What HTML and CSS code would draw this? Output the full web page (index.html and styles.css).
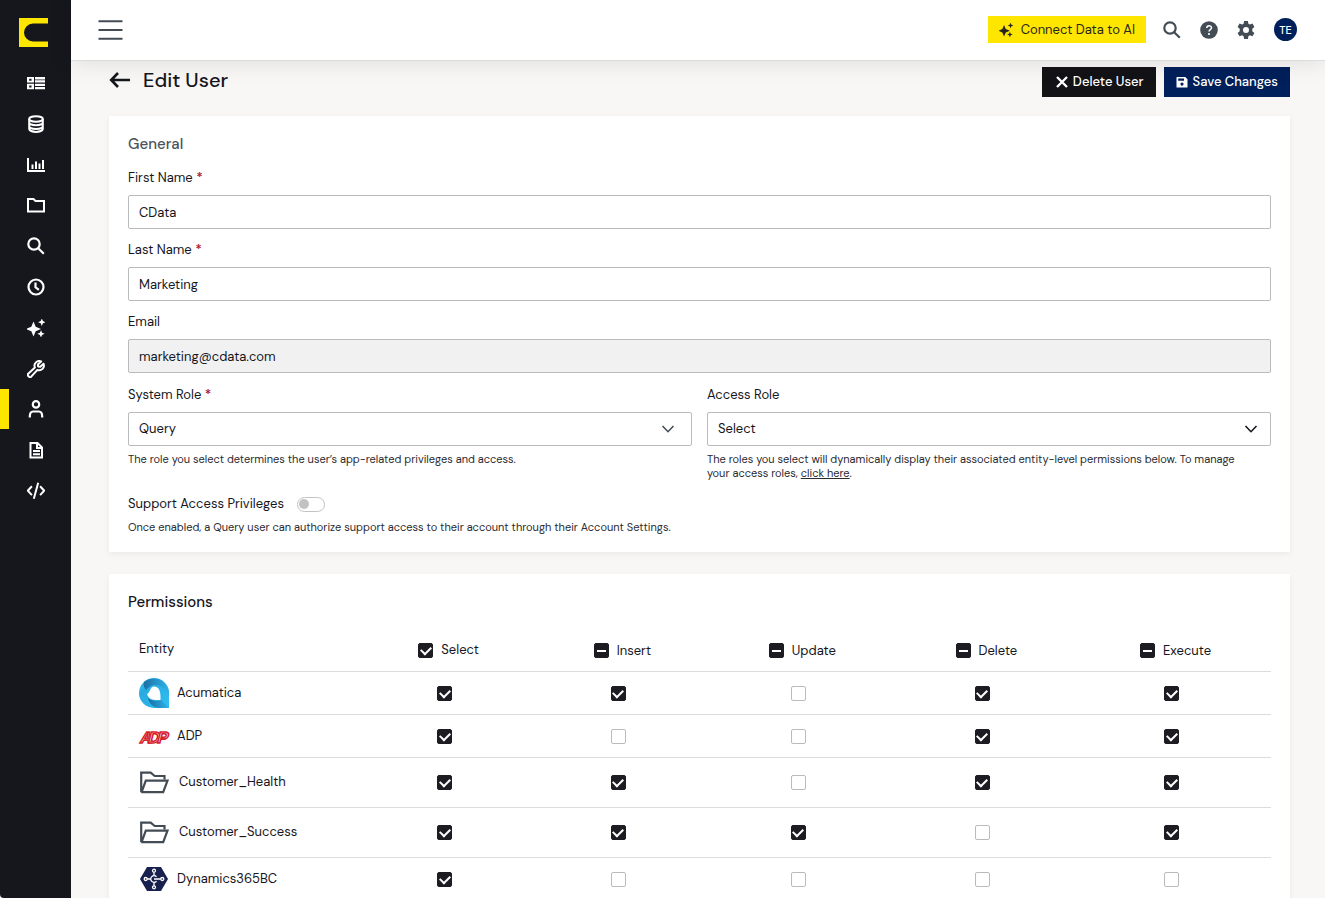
FILE: index.html
```html
<!DOCTYPE html>
<html lang="en">
<head>
<meta charset="utf-8">
<meta name="viewport" content="width=device-width, initial-scale=1">
<title>Edit User</title>
<link rel="stylesheet" href="styles.css">
</head>
<body>
<svg class="defs" aria-hidden="true">
  <symbol id="sparkles" viewBox="0 0 18 18"><path fill="currentColor" d="M6.500 2.500 8.700 7.800 14 10 8.700 12.200 6.500 17.500 4.300 12.200-1 10 4.300 7.800ZM14.800-.5l1.100 2.600L18.500 3.200l-2.600 1.100-1.100 2.600-1.100-2.600-2.600-1.100 2.600-1.100ZM14 11.300l1.100 2.500 2.500 1-2.500 1.100L14 18.500l-1.100-2.600-2.500-1.100 2.500-1Z"/></symbol>
  <symbol id="magnifier" viewBox="0 0 18 18"><g fill="none" stroke="currentColor" stroke-width="2.200"><circle cx="7" cy="7" r="5.700"/><path d="m11.200 11.200 5.600 5.600"/></g></symbol>
  <symbol id="chevron" viewBox="0 0 14 14"><path d="m1.500 4 5.500 5.700L12.500 4" fill="none" stroke="currentColor" stroke-width="1.600"/></symbol>
  <symbol id="folder-open" viewBox="0 0 30 23"><path d="M2.200 21.200V1.700h9.500l4 3.300h9.800v3.200M2.200 21.200h22l4.300-11.500H6.800L2.600 21.200" fill="none" stroke="currentColor" stroke-width="2.200"/></symbol>
</svg>
<div class="app">
  <aside class="sidebar">
    <a class="logo" href="#" aria-label="Home"><svg viewBox="0 0 29 29"><path fill="#ffe600" d="M0 0h29v5.500H14A9 9 0 0 0 14 23.500h15V29H0Z"/></svg></a>
    <nav class="nav" aria-label="Main">
      <a href="#" aria-label="Dashboard"><svg viewBox="0 0 18 18"><g fill="currentColor"><path fill-rule="evenodd" d="M0 3h7v5.500H0Zm2.200 1.700v2h2.300v-2ZM0 9.800h7v5.500H0Zm2.200 1.700v2h2.300v-2Z"/><path d="M8 3h10v2.400H8ZM8 6.300h10v2.300H8ZM8 9.700h10V12H8ZM8 12.900h10v2.400H8Z"/></g></svg></a>
      <a href="#" aria-label="Connections"><svg viewBox="0 0 18 18"><g fill="none" stroke="currentColor" stroke-width="2"><ellipse cx="9" cy="4" rx="6.800" ry="2.700"/><path d="M2.200 4v10c0 1.500 3 2.900 6.800 2.900s6.800-1.400 6.800-2.900V4M2.200 7.600c0 1.500 3 2.700 6.800 2.700s6.800-1.200 6.800-2.700M2.200 11.200c0 1.500 3 2.700 6.800 2.700s6.800-1.200 6.800-2.700"/></g></svg></a>
      <a href="#" aria-label="Usage"><svg viewBox="0 0 18 18"><path d="M1 2v13h17M5.500 13V8.500M9 13V5.500M12.500 13V7.500M16 13V4" fill="none" stroke="currentColor" stroke-width="2"/></svg></a>
      <a href="#" aria-label="Workspaces"><svg viewBox="0 0 18 18"><path d="M1 3h5.500l2 2H17v10.500H1Z" fill="none" stroke="currentColor" stroke-width="2"/></svg></a>
      <a href="#" aria-label="Explorer"><svg><use href="#magnifier"/></svg></a>
      <a href="#" aria-label="Jobs"><svg viewBox="0 0 18 18"><g fill="none" stroke="currentColor" stroke-width="2.200"><circle cx="9" cy="9" r="7.500"/><path d="M8.500 4.500V9.300l3.400 2.500"/></g></svg></a>
      <a href="#" aria-label="AI"><svg class="spark"><use href="#sparkles"/></svg></a>
      <a href="#" aria-label="Tools"><svg viewBox="0 0 18 18"><path d="M14.200 1.500a4.700 4.700 0 0 0-6.300 6.100L1.200 13.800a1.500 1.500 0 0 0 0 2.100l.9.800a1.500 1.500 0 0 0 2.100 0l6.200-6.800a4.700 4.700 0 0 0 6.100-6.200l-3.200 3-2.200-.3-.2-2Z" fill="none" stroke="currentColor" stroke-width="2" stroke-linejoin="round"/></svg></a>
      <a class="current" href="#" aria-label="Users" aria-current="page"><svg viewBox="0 0 18 18"><g fill="none" stroke="currentColor" stroke-width="2.200"><circle cx="9" cy="4.400" r="3.200"/><path d="M2.800 17.500v-1c0-3 1.200-5 3.400-5h5.600c2.200 0 3.400 2 3.400 5v1"/></g></svg></a>
      <a href="#" aria-label="Logs"><svg viewBox="0 0 18 18"><path d="M3.500 2h7l4.500 4.500V16.500h-11.500ZM10 2v5h5M6 10h7M6 13.200h7" fill="none" stroke="currentColor" stroke-width="2"/></svg></a>
      <a href="#" aria-label="API"><svg viewBox="0 0 18 18"><path d="M4.900 4.300.8 8.700l4.100 4.400M13.100 4.300l4.100 4.400-4.100 4.400M11.200.7 6.800 16.700" fill="none" stroke="currentColor" stroke-width="2"/></svg></a>
    </nav>
  </aside>
  <div class="page">
    <header class="topbar">
      <button class="menu" type="button" aria-label="Toggle menu"><svg viewBox="0 0 24 20"><path d="M0 1.200h24M0 10h24M0 18.800h24" stroke="currentColor" stroke-width="2"/></svg></button>
      <div class="topbar-tools">
        <button class="button connect" type="button"><svg><use href="#sparkles"/></svg>Connect Data to AI</button>
        <button class="tool" type="button" aria-label="Search"><svg><use href="#magnifier"/></svg></button>
        <button class="tool" type="button" aria-label="Help"><svg viewBox="0 0 18 18"><circle cx="9" cy="9" r="8.800" fill="currentColor"/><path d="M6.800 7c0-3 4.700-2.900 4.700-.2C11.500 8.600 9 8.500 9 10.600" fill="none" stroke="#fff" stroke-width="1.500"/><circle cx="9" cy="13" r="1.100" fill="#fff"/></svg></button>
        <button class="tool" type="button" aria-label="Settings"><svg viewBox="0 0 18 18"><path fill="currentColor" fill-rule="evenodd" d="M7.100 0h3.800l.5 2.700 1.500.9 2.600-1 1.900 3.300-2.100 1.800v2.600l2.100 1.800-1.900 3.200-2.600-1-1.500.9-.5 2.800H7.100l-.5-2.800-1.500-.9-2.600 1L.6 12.100l2.100-1.800V7.700L.6 5.900l1.900-3.300 2.600 1 1.500-.9ZM9 6a3 3 0 1 0 0 6 3 3 0 0 0 0-6Z"/></svg></button>
        <button class="avatar" type="button" aria-label="Account">TE</button>
      </div>
    </header>
    <main class="content">
      <div class="title-row">
        <a class="back" href="#" aria-label="Back"><svg viewBox="0 0 22 18"><path d="M21 9H2.500M9 2 2.200 9 9 16" fill="none" stroke="currentColor" stroke-width="2.600"/></svg></a>
        <h1>Edit User</h1>
        <div class="actions">
          <button class="button dark" type="button"><svg viewBox="0 0 12 12"><path d="m1 1 10 10M11 1 1 11" stroke="currentColor" stroke-width="2.400"/></svg>Delete User</button>
          <button class="button navy" type="button"><svg viewBox="0 0 12 12"><path fill="currentColor" fill-rule="evenodd" d="M1 1h8.200L11.500 3.300V11q0 .5-.5.500H1q-.5 0-.5-.5V1.500Q.5 1 1 1Zm1.200 1.500v2.300h5.800V2.500ZM6 6.500a1.600 1.600 0 1 0 0 3.200 1.600 1.600 0 0 0 0-3.200Z"/></svg>Save Changes</button>
        </div>
      </div>

      <form class="card general">
        <h2 class="muted">General</h2>
        <div class="fields">
          <div class="field"><label for="first">First Name <span class="required">*</span></label><input class="control" id="first" type="text" value="CData"></div>
          <div class="field"><label for="last">Last Name <span class="required">*</span></label><input class="control" id="last" type="text" value="Marketing"></div>
          <div class="field"><label for="email">Email</label><input class="control" id="email" type="email" value="marketing@cdata.com" readonly></div>
          <div class="pair">
            <div class="field">
              <label for="system">System Role <span class="required">*</span></label>
              <div class="select soft"><select class="control" id="system"><option>Query</option></select><svg><use href="#chevron"/></svg></div>
              <p class="hint">The role you select determines the user’s app-related privileges and access.</p>
            </div>
            <div class="field">
              <label for="access">Access Role</label>
              <div class="select"><select class="control" id="access"><option>Select</option></select><svg><use href="#chevron"/></svg></div>
              <p class="hint">The roles you select will dynamically display their associated entity-level permissions below. To manage your access roles, <a href="#">click here</a>.</p>
            </div>
          </div>
        </div>
        <div class="support"><label for="support">Support Access Privileges</label><input class="switch" id="support" type="checkbox" role="switch"></div>
        <p class="hint">Once enabled, a Query user can authorize support access to their account through their Account Settings.</p>
      </form>

      <section class="card permissions">
        <h2>Permissions</h2>
        <table>
          <colgroup><col class="col-entity"><col class="col-select"><col class="col-insert"><col class="col-update"><col class="col-delete"><col class="col-execute"></colgroup>
          <thead>
            <tr>
              <th scope="col">Entity</th>
              <th scope="col"><label><input class="check" type="checkbox" checked>Select</label></th>
              <th scope="col"><label><input class="check partial" type="checkbox">Insert</label></th>
              <th scope="col"><label><input class="check partial" type="checkbox">Update</label></th>
              <th scope="col"><label><input class="check partial" type="checkbox">Delete</label></th>
              <th scope="col"><label><input class="check partial" type="checkbox">Execute</label></th>
            </tr>
          </thead>
          <tbody>
            <tr>
              <th scope="row"><span class="entity"><svg viewBox="0 0 30 30"><defs><linearGradient id="aqua" x2="1" y2="1"><stop stop-color="#35c6f5"/><stop offset=".3" stop-color="#28aae1"/><stop offset="1" stop-color="#2fc0f2"/></linearGradient><linearGradient id="deep" x2="1" y2="0"><stop stop-color="#1a6fa5"/><stop offset="1" stop-color="#2fb4ea"/></linearGradient></defs><path fill="url(#aqua)" d="M15 0a15 15 0 0 1 15 15v15H15A15 15 0 0 1 15 0Z"/><path fill="url(#deep)" d="M5 4C14-3 29 2 30 14v4C25 6 14 3 7 12 5 9 4 7 5 4Z"/><path fill="url(#deep)" d="M9 20c4 3 9 4 13 2L30 30H20c-7-1-10-5-11-10Z"/><path fill="#fff" d="M15 8.500c5 0 7 5 6.500 13.500h-5c-5 0-7.500-3-8.500-6 3-1 3-7.500 7-7.500Z"/></svg>Acumatica</span></th>
              <td><input class="check" type="checkbox" aria-label="Acumatica select" checked></td>
              <td><input class="check" type="checkbox" aria-label="Acumatica insert" checked></td>
              <td><input class="check" type="checkbox" aria-label="Acumatica update"></td>
              <td><input class="check" type="checkbox" aria-label="Acumatica delete" checked></td>
              <td><input class="check" type="checkbox" aria-label="Acumatica execute" checked></td>
            </tr>
            <tr>
              <th scope="row"><span class="entity"><svg class="adp" viewBox="0 0 30 30" aria-hidden="true"><g transform="translate(5 0) skewX(-14)"><text class="adp-mark" x="1 9 18" y="22">ADP</text></g></svg>ADP</span></th>
              <td><input class="check" type="checkbox" aria-label="ADP select" checked></td>
              <td><input class="check" type="checkbox" aria-label="ADP insert"></td>
              <td><input class="check" type="checkbox" aria-label="ADP update"></td>
              <td><input class="check" type="checkbox" aria-label="ADP delete" checked></td>
              <td><input class="check" type="checkbox" aria-label="ADP execute" checked></td>
            </tr>
            <tr class="tall">
              <th scope="row"><span class="entity"><svg class="folder"><use href="#folder-open"/></svg>Customer_Health</span></th>
              <td><input class="check" type="checkbox" aria-label="Customer_Health select" checked></td>
              <td><input class="check" type="checkbox" aria-label="Customer_Health insert" checked></td>
              <td><input class="check" type="checkbox" aria-label="Customer_Health update"></td>
              <td><input class="check" type="checkbox" aria-label="Customer_Health delete" checked></td>
              <td><input class="check" type="checkbox" aria-label="Customer_Health execute" checked></td>
            </tr>
            <tr class="tall">
              <th scope="row"><span class="entity"><svg class="folder"><use href="#folder-open"/></svg>Customer_Success</span></th>
              <td><input class="check" type="checkbox" aria-label="Customer_Success select" checked></td>
              <td><input class="check" type="checkbox" aria-label="Customer_Success insert" checked></td>
              <td><input class="check" type="checkbox" aria-label="Customer_Success update" checked></td>
              <td><input class="check" type="checkbox" aria-label="Customer_Success delete"></td>
              <td><input class="check" type="checkbox" aria-label="Customer_Success execute" checked></td>
            </tr>
            <tr>
              <th scope="row"><span class="entity"><svg viewBox="0 0 30 30"><path fill="#18204e" d="M8 3h14l7 12-7 12H8L1 15Z"/><g fill="none" stroke="#fff" stroke-width="1.300"><path d="M17.500 12.800a3.300 3.300 0 1 0 0 4.400"/><circle cx="15" cy="6.700" r="1.500"/><circle cx="15" cy="23.300" r="1.500"/><circle cx="6.700" cy="15" r="1.500"/><circle cx="23.300" cy="15" r="1.500"/><path d="M15 8.200v3.600M15 18.200v3.600M8.200 15h3.600M15 15h6.800"/></g></svg>Dynamics365BC</span></th>
              <td><input class="check" type="checkbox" aria-label="Dynamics365BC select" checked></td>
              <td><input class="check" type="checkbox" aria-label="Dynamics365BC insert"></td>
              <td><input class="check" type="checkbox" aria-label="Dynamics365BC update"></td>
              <td><input class="check" type="checkbox" aria-label="Dynamics365BC delete"></td>
              <td><input class="check" type="checkbox" aria-label="Dynamics365BC execute"></td>
            </tr>
          </tbody>
        </table>
      </section>
    </main>
  </div>
</div>
</body>
</html>
```
FILE: styles.css
```css
* { box-sizing: border-box; }

body {
  margin: 0;
  background: #f8f7f6;
  color: #16161d;
  font: 400 13px/18px "DM Sans", Inter, "Open Sans", sans-serif;
}

h1, h2, p { margin: 0; }
button, input, select { font: inherit; color: inherit; }
svg { display: block; flex: none; }
.defs { display: none; }

.app { display: flex; height: 100vh; overflow: hidden; }

.sidebar {
  flex: none;
  width: 71px;
  padding-top: 18px;
  border-bottom-left-radius: 4px;
  background: #16161d;
  color: #fff;
}
.logo { display: block; width: 29px; margin: 0 auto 16px 19px; }
.logo svg { width: 29px; height: 29px; }
.nav {
  display: flex;
  flex-direction: column;
  justify-content: space-between;
  height: 448px;
}
.nav a {
  display: flex;
  align-items: center;
  height: 40px;
  padding-left: 27px;
  color: #fff;
}
.nav svg { width: 18px; height: 18px; }
.spark { overflow: visible; }
.nav .current { padding-left: 18px; border-left: 9px solid #ffe600; }

.page { display: flex; flex: 1; flex-direction: column; min-width: 0; }

.topbar {
  z-index: 1;
  display: flex;
  flex: none;
  align-items: center;
  justify-content: space-between;
  height: 61px;
  padding: 0 28px 1px 27px;
  border-bottom: 1px solid #dcdddd;
  background: #fff;
  box-shadow: 0 2px 24px rgb(0 0 0 / 10%);
}
.menu, .tool { padding: 0; border: 0; background: none; color: #434c55; }
.menu svg { width: 25px; height: 20px; }
.topbar-tools { display: flex; align-items: center; gap: 19px; }
.tool svg { width: 18px; height: 18px; }
.avatar {
  width: 23px;
  height: 23px;
  padding: 0;
  border: 0;
  border-radius: 50%;
  background: #00205b;
  color: #fff;
  font-size: 11px;
  font-weight: 500;
}

.button {
  display: flex;
  align-items: center;
  height: 30px;
  padding: 0 12px;
  border: 0;
  gap: 5px;
  color: #fff;
  font-weight: 500;
}
.button svg { width: 12px; height: 12px; }
.dark { padding-left: 14px; background: #121217; }
.navy { background: #00205b; }
.connect {
  height: 27px;
  margin-right: -2px;
  padding: 0 11px;
  gap: 8px;
  background: #ffe600;
  color: #26261b;
  font-weight: 400;
}
.connect svg { width: 14px; height: 14px; }

.content { flex: 1; padding: 6px 35px 0 38px; overflow: hidden; }
.title-row { display: flex; align-items: flex-start; margin-bottom: 19px; }
.back { display: flex; align-items: center; height: 26px; color: inherit; }
.back svg { width: 22px; height: 18px; }
h1 { margin-left: 12px; font-size: 20px; line-height: 26px; font-weight: 500; }
.actions { display: flex; gap: 8px; margin-left: auto; }

.card {
  padding: 18px 19px;
  background: #fff;
  box-shadow: 0 2px 6px rgb(0 0 0 / 6%);
}
.card + .card { margin-top: 22px; }
h2 { font-size: 15px; line-height: 20px; font-weight: 500; }
.muted { margin-bottom: 15px; color: #4b545d; }

.fields { display: grid; gap: 12px; }
.pair { display: grid; grid-template-columns: 1fr 1fr; gap: 15px; padding-top: 1px; }
.field label { display: block; margin-bottom: 8px; }
.required { color: #b0172b; font-weight: 600; }
.control {
  display: block;
  width: 100%;
  height: 34px;
  padding: 0 10px;
  border: 1px solid #b9bbbd;
  border-radius: 2px;
  background: #fff;
  appearance: none;
}
.control:read-only:not(select) { background: #f1f1f1; }
.select { display: grid; align-items: center; }
.select > * { grid-area: 1 / 1; }
.select svg { width: 14px; height: 14px; margin-right: 13px; justify-self: end; pointer-events: none; }
.soft svg { margin-right: 17px; color: #434c55; }
.hint { margin-top: 6px; font-size: 11px; line-height: 14px; color: #2a2a31; }
.field .hint { padding-right: 16px; }
.hint a { color: inherit; }
.support { display: flex; align-items: center; gap: 13px; height: 20px; margin-top: 14px; }
.switch {
  display: flex;
  align-items: center;
  width: 28px;
  height: 15px;
  margin: 0;
  padding: 0 1px;
  border: 1px solid #c1c2c4;
  border-radius: 8px;
  appearance: none;
}
.switch::before { width: 10px; height: 10px; border-radius: 50%; background: #c1c2c4; content: ""; }

table { width: 100%; margin-top: 16px; border-collapse: collapse; table-layout: fixed; }
.col-entity { width: 20.700%; }
.col-select { width: 14.700%; }
.col-insert { width: 15.700%; }
.col-update { width: 15.800%; }
.col-delete { width: 16.400%; }
.col-execute { width: 16.700%; }
th, td { height: 43px; padding: 0; border-bottom: 1px solid #dadcde; font-weight: 400; text-align: center; }
th:first-child { padding-left: 11px; text-align: left; }
td { padding-right: 8px; }
.tall > * { height: 50px; }
th label { display: inline-flex; align-items: center; gap: 8px; }
.entity { display: flex; align-items: center; gap: 8px; }
.entity svg { width: 30px; height: 30px; }
.entity .folder { width: 30px; height: 23px; margin-right: 2px; color: #434c55; }
.entity .adp { overflow: visible; }
.adp-mark {
  fill: #fff;
  stroke: #d8232f;
  stroke-width: 1.600px;
  font: 700 16px "Liberation Sans", Arial, sans-serif;
}

.check {
  display: inline-grid;
  place-items: center;
  width: 15px;
  height: 15px;
  margin: 0;
  border: 1px solid #b9bbbd;
  border-radius: 2px;
  background: #fff;
  vertical-align: middle;
  appearance: none;
}
.check:checked, .partial { border-color: #1c1c22; background: #1c1c22; }
.check:checked::before {
  width: 8px;
  height: 5px;
  margin-bottom: 2px;
  border: solid #fff;
  border-width: 0 0 2px 2px;
  content: "";
  rotate: -45deg;
}
.partial::before { width: 9px; height: 2px; background: #fff; content: ""; }
```
